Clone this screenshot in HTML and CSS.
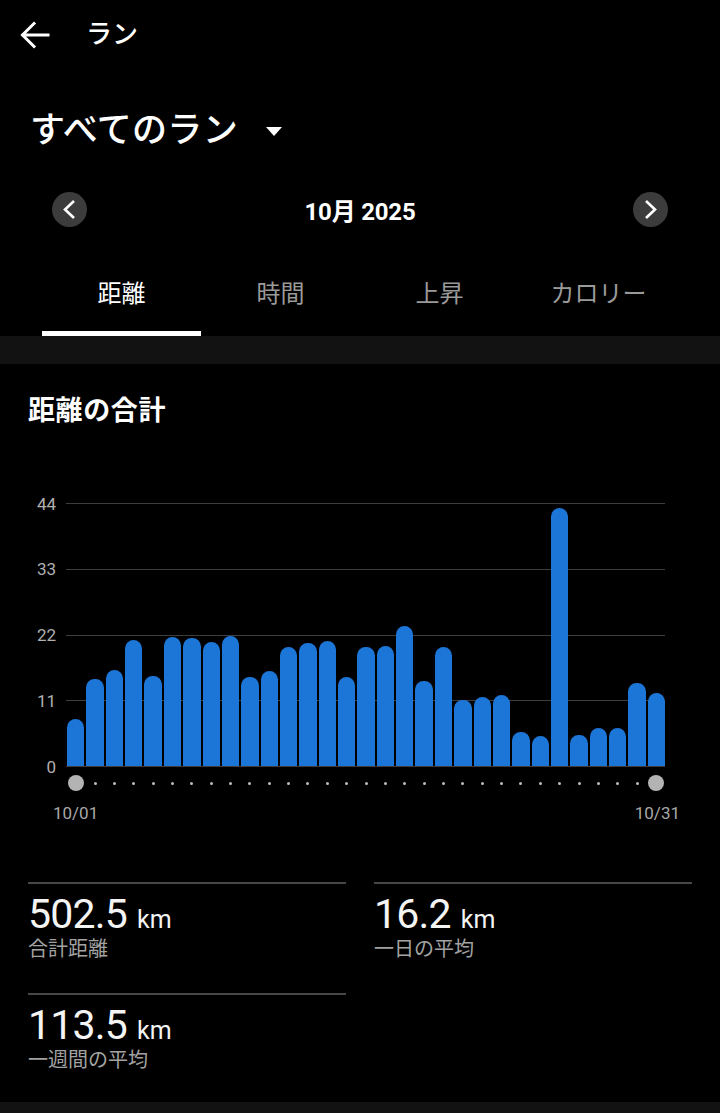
FILE: index.html
```html
<!DOCTYPE html>
<html lang="ja">
<head>
<meta charset="utf-8">
<title>ラン</title>
<link rel="stylesheet" href="styles.css">
</head>
<body>
<div class="app">
  <header class="appbar">
    <svg class="back" width="32" height="32" viewBox="0 0 32 32" aria-hidden="true">
      <path d="M29 16H4 M15 4.5L3.5 16L15 27.5" fill="none" stroke="#fff" stroke-width="3" stroke-linecap="square"/>
    </svg>
    <span class="appbar-title">ラン</span>
  </header>

  <div class="filter">
    <span class="filter-title">すべてのラン</span>
    <span class="caret"></span>
  </div>

  <div class="datenav">
    <button class="navbtn" aria-label="前へ">
      <svg width="35" height="35" viewBox="0 0 35 35"><path d="M22 9L13 17.5L22 26" fill="none" stroke="#fff" stroke-width="2.6"/></svg>
    </button>
    <span class="month">10月 2025</span>
    <button class="navbtn" aria-label="次へ">
      <svg width="35" height="35" viewBox="0 0 35 35"><path d="M13 9L22 17.5L13 26" fill="none" stroke="#fff" stroke-width="2.6"/></svg>
    </button>
  </div>

  <nav class="tabs">
    <div class="tab active">距離</div>
    <div class="tab">時間</div>
    <div class="tab">上昇</div>
    <div class="tab">カロリー</div>
  </nav>

  <div class="band"></div>

  <section class="card">
    <h2 class="card-title">距離の合計</h2>

    <div class="chart">
      <div class="yaxis">
        <span>44</span><span>33</span><span>22</span><span>11</span><span>0</span>
      </div>
      <div class="plot-col">
        <div class="plot">
          <div class="grid">
            <i></i><i></i><i></i><i></i><i></i>
          </div>
          <div class="bars">
            <b style="height:47px"></b>
            <b style="height:87px"></b>
            <b style="height:96px"></b>
            <b style="height:126px"></b>
            <b style="height:90px"></b>
            <b style="height:129px"></b>
            <b style="height:128px"></b>
            <b style="height:124px"></b>
            <b style="height:130px"></b>
            <b style="height:89px"></b>
            <b style="height:95px"></b>
            <b style="height:119px"></b>
            <b style="height:123px"></b>
            <b style="height:125px"></b>
            <b style="height:89px"></b>
            <b style="height:119px"></b>
            <b style="height:120px"></b>
            <b style="height:140px"></b>
            <b style="height:85px"></b>
            <b style="height:119px"></b>
            <b style="height:66px"></b>
            <b style="height:69px"></b>
            <b style="height:71px"></b>
            <b style="height:34px"></b>
            <b style="height:30px"></b>
            <b style="height:258px"></b>
            <b style="height:31px"></b>
            <b style="height:38px"></b>
            <b style="height:38px"></b>
            <b style="height:83px"></b>
            <b style="height:73px"></b>
          </div>
        </div>
        <div class="dots">
          <span class="big"></span>
          <span></span><span></span><span></span><span></span><span></span><span></span><span></span><span></span><span></span><span></span>
          <span></span><span></span><span></span><span></span><span></span><span></span><span></span><span></span><span></span><span></span>
          <span></span><span></span><span></span><span></span><span></span><span></span><span></span><span></span><span></span>
          <span class="big"></span>
        </div>
      </div>
    </div>
    <div class="xlabels">
      <span>10/01</span>
      <span>10/31</span>
    </div>

    <div class="stats">
      <div class="stat">
        <div class="stat-value">502.5<span class="unit">km</span></div>
        <div class="stat-label">合計距離</div>
      </div>
      <div class="stat">
        <div class="stat-value">16.2<span class="unit">km</span></div>
        <div class="stat-label">一日の平均</div>
      </div>
      <div class="stat">
        <div class="stat-value">113.5<span class="unit">km</span></div>
        <div class="stat-label">一週間の平均</div>
      </div>
    </div>
  </section>

  <div class="band bottom"></div>
</div>
</body>
</html>
```

FILE: styles.css
```css
* { box-sizing: border-box; }

html, body {
  margin: 0;
  padding: 0;
  background: #000;
}

body {
  font-family: Roboto, "Noto Sans CJK JP", sans-serif;
  color: #fff;
  width: 720px;
  height: 1113px;
  overflow: hidden;
}

.app {
  display: flex;
  flex-direction: column;
}

/* App bar */
.appbar {
  height: 70px;
  display: flex;
  align-items: center;
  padding-left: 19px;
}

.back {
  display: block;
  margin-top: -1px;
}

.appbar-title {
  margin-left: 35px;
  font-size: 26px;
  font-weight: 500;
  line-height: 1;
  margin-top: -2px;
}

/* Filter title */
.filter {
  height: 120px;
  display: flex;
  align-items: center;
  padding-left: 30px;
}

.filter-title {
  font-size: 35px;
  font-weight: 500;
  line-height: 1;
  letter-spacing: 0.3px;
}

.caret {
  margin-left: 28px;
  margin-top: 2px;
  width: 0;
  height: 0;
  border-left: 8.5px solid transparent;
  border-right: 8.5px solid transparent;
  border-top: 9px solid #fff;
}

/* Date navigation */
.datenav {
  height: 40px;
  display: flex;
  align-items: center;
  justify-content: space-between;
  padding: 0 52px 0 52px;
}

.navbtn {
  width: 35px;
  height: 35px;
  padding: 0;
  border: 0;
  border-radius: 50%;
  background: #3c3c3c;
  display: flex;
  align-items: center;
  justify-content: center;
  margin-top: -2px;
}

.navbtn svg { display: block; }

.month {
  font-size: 24px;
  font-weight: 700;
  letter-spacing: -0.2px;
  margin-top: -2px;
}

/* Tabs */
.tabs {
  margin: 20px 42px 0 42px;
  display: grid;
  grid-template-columns: repeat(4, 1fr);
  height: 86px;
}

.tab {
  display: flex;
  align-items: center;
  justify-content: center;
  font-size: 24px;
  color: #9a9a9a;
  line-height: 1;
  padding-top: 2px;
}

.tab.active {
  color: #fff;
  box-shadow: inset 0 -5px 0 #fff;
}

.band {
  height: 28px;
  background: #121212;
}

.band.bottom {
  height: 11px;
  margin-top: 29px;
}

/* Card */
.card {
  display: flex;
  flex-direction: column;
}

.card-title {
  margin: 0;
  height: 88px;
  display: flex;
  align-items: center;
  padding-left: 28px;
  font-size: 27px;
  font-weight: 700;
  letter-spacing: 0.6px;
}

.chart {
  margin-top: 51px;
  display: flex;
  gap: 10px;
}

.yaxis {
  width: 56px;
  height: 264px;
  display: flex;
  flex-direction: column;
  justify-content: space-between;
  align-items: flex-end;
  font-size: 17px;
  color: #b0b0b0;
}

.yaxis span {
  height: 1px;
  display: flex;
  align-items: center;
}

.plot-col {
  width: 599px;
}

.plot {
  height: 264px;
  display: grid;
}

.grid, .bars {
  grid-area: 1 / 1;
}

.grid {
  display: flex;
  flex-direction: column;
  justify-content: space-between;
}

.grid i {
  display: block;
  height: 1px;
  background: #3d3d3d;
}

.bars {
  display: flex;
  align-items: flex-end;
  gap: 2px;
  padding-left: 1px;
  padding-bottom: 1px;
}

.bars b {
  flex: 1;
  background: #1c76d8;
  border-radius: 8.5px 8.5px 0 0;
}

.dots {
  margin-top: 8px;
  height: 16px;
  display: flex;
  align-items: center;
  gap: 2px;
  padding-left: 1px;
}

.dots span {
  flex: 1;
  display: flex;
  justify-content: center;
}

.dots span::before {
  content: "";
  width: 3px;
  height: 3px;
  border-radius: 50%;
  background: #bdbdbd;
}

.dots span.big::before {
  width: 16px;
  height: 16px;
  background: #b3b3b3;
}

.xlabels {
  margin-top: 12px;
  display: flex;
  justify-content: space-between;
  padding: 0 40px 0 53px;
  font-size: 17px;
  line-height: 20px;
  color: #a8a8a8;
}

/* Stats */
.stats {
  margin-top: 59px;
  padding: 0 28px;
  display: grid;
  grid-template-columns: 1fr 1fr;
  column-gap: 28px;
  row-gap: 31px;
}

.stat {
  border-top: 2px solid #474747;
  padding-top: 8px;
}

.stat-value {
  font-size: 41px;
  line-height: 44px;
  height: 44px;
  color: #f4f4f4;
  letter-spacing: -0.8px;
}

.unit {
  font-size: 25px;
  line-height: 1;
  margin-left: 10px;
  letter-spacing: 0;
}

.stat-label {
  font-size: 20px;
  line-height: 26px;
  color: #a3a3a3;
}
```
